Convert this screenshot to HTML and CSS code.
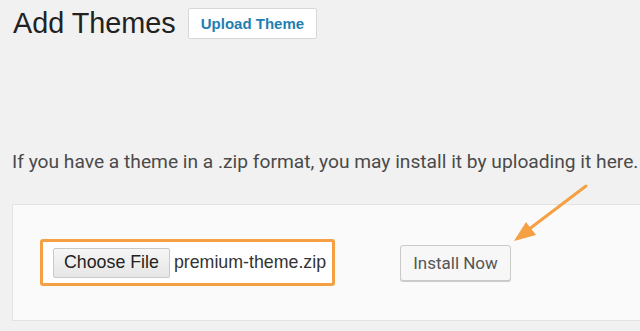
FILE: index.html
```html
<!DOCTYPE html>
<html lang="en">
<head>
  <meta charset="UTF-8" />
  <meta name="viewport" content="width=device-width, initial-scale=1.0" />
  <title>Add Themes</title>
  <link rel="stylesheet" href="styles.css">
</head>
<body>
  <div class="wrap">
    <div class="page-head">
      <h1>Add Themes</h1>
      <button class="upload-btn">Upload Theme</button>
    </div>

    <p class="help">If you have a theme in a .zip format, you may install it by uploading it here.</p>

    <div class="upload-box">
      <div class="file-pick">
        <button class="choose-btn">Choose File</button>
        <span class="file-name">premium-theme.zip</span>
      </div>
      <button class="install-btn">Install Now</button>

      <!-- arrow pointing at the install button -->
      <svg class="arrow" width="80" height="62" viewBox="0 0 80 62">
        <line x1="76" y1="3" x2="14" y2="50" stroke="#f4a043" stroke-width="3" stroke-linecap="round" />
        <polygon points="4,58 16,39 26,52" fill="#f4a043" />
      </svg>
    </div>
  </div>
</body>
</html>
```

FILE: styles.css
```css
body {
  margin: 0;
  background: #f1f1f1;
  font-family: Roboto, "Liberation Sans", sans-serif;
  color: #444;
  overflow: hidden;
}

.wrap {
  padding: 8px 0 0 12px;
}

.page-head {
  display: flex;
  align-items: center;
  gap: 12px;
}

.page-head h1 {
  margin: 0;
  font-family: "Liberation Sans", Arial, sans-serif;
  font-weight: 400;
  font-size: 28.8px;
  line-height: 31px;
  color: #222;
  padding-left: 1px;
}

.upload-btn {
  height: 31px;
  padding: 0 12px;
  background: #fff;
  border: 1px solid #d7d7d7;
  border-radius: 2px;
  color: #1e7fb0;
  font-family: "Liberation Sans", Arial, sans-serif;
  font-weight: 700;
  font-size: 15px;
}

.help {
  margin: 111px 0 0;
  font-size: 19.2px;
  line-height: 24px;
  color: #4a4a4a;
  white-space: nowrap;
}

.upload-box {
  position: relative;
  margin-top: 30px;
  height: 115px;
  background: #fafafa;
  border: 1px solid #e2e2e2;
  border-right: none;
  display: flex;
  align-items: center;
  padding-left: 27px;
  gap: 65px;
}

.file-pick {
  display: flex;
  align-items: center;
  gap: 4px;
  width: 279px;
  height: 41px;
  padding: 0 0 0 10px;
  border: 3px solid #f4a043;
  border-radius: 3px;
  background: #fff;
}

.choose-btn {
  height: 30px;
  padding: 0 10px;
  background: linear-gradient(#f6f6f6, #e6e6e6);
  border: 1px solid #c9c9c9;
  border-radius: 2px;
  font-family: "Liberation Sans", Arial, sans-serif;
  font-size: 17.8px;
  color: #222;
}

.file-name {
  font-family: "Liberation Sans", Arial, sans-serif;
  font-size: 17.8px;
  color: #333;
  white-space: nowrap;
}

.install-btn {
  width: 111px;
  height: 36px;
  background: #f7f7f7;
  border: 1px solid #cacaca;
  border-radius: 3px;
  box-shadow: 0 1px 0 #ccc;
  font-family: Roboto, sans-serif;
  font-size: 17px;
  color: #555;
}

.arrow {
  position: absolute;
  left: 497px;
  top: -22px;
}
```
